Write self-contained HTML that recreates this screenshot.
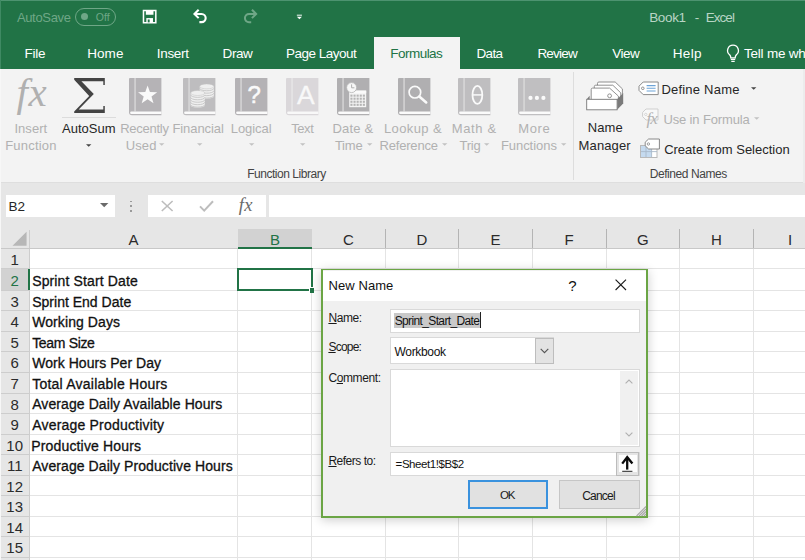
<!DOCTYPE html>
<html lang="en"><head><meta charset="utf-8"><title>Book1 - Excel</title>
<style>
html,body{margin:0;padding:0;}
body{width:805px;height:560px;overflow:hidden;position:relative;background:#e6e6e6;font-family:"Liberation Sans",sans-serif;}
#app{position:absolute;left:0;top:0;width:805px;height:560px;overflow:hidden;}
.t{position:absolute;white-space:pre;line-height:1;}
.t u{text-decoration:underline;text-underline-offset:1px;}
.a{position:absolute;}
svg{position:absolute;overflow:visible;}
</style></head><body><div id="app">
<div class="a" style="left:0;top:0;width:805px;height:69.2px;background:#217346;"></div>
<div class="a" style="left:0;top:0;width:805px;height:1px;background:#4d9370;"></div><div class="a" style="left:0;top:0;width:1px;height:69px;background:#3f8a63;"></div>
<div class="a" style="left:374.4px;top:37px;width:85.3px;height:33px;background:#f3f3f3;"></div>
<span class="t" style="left:16.90px;top:11.25px;font-size:13px;color:#6fa787;letter-spacing:-0.335px;">AutoSave</span>
<div class="a" style="left:75.3px;top:8.2px;width:40.7px;height:17.6px;border:1px solid #6fa787;border-radius:9px;box-sizing:border-box;"></div>
<div class="a" style="left:81px;top:13px;width:7px;height:7px;border-radius:50%;background:#6fa787;"></div>
<span class="t" style="left:95.70px;top:12.07px;font-size:10.5px;color:#6fa787;letter-spacing:0.053px;">Off</span>
<svg style="left:143.3px;top:10.4px" width="13.3" height="13.3" viewBox="0 0 14 14"><path d="M0.5 0.5h13v13h-13z" fill="none" stroke="#fff" stroke-width="1.6"/><rect x="3" y="0.5" width="8" height="4.5" fill="#fff"/><rect x="3.5" y="8.5" width="7" height="5" fill="#fff"/><rect x="5" y="10" width="2" height="3" fill="#217346"/></svg>
<svg style="left:193.2px;top:9.2px" width="14.6" height="14.6" viewBox="0 0 16 16"><path d="M1.6 5.4H9.4a4.5 4.5 0 0 1 0 9H7" fill="none" stroke="#fff" stroke-width="2.3"/><path d="M6.2 0.8L1.6 5.4L6.2 10" fill="none" stroke="#fff" stroke-width="2.3"/></svg>
<svg style="left:243px;top:9.2px" width="14.6" height="14.6" viewBox="0 0 16 16"><path d="M14.4 5.4H6.6a4.5 4.5 0 0 0 0 9H9" fill="none" stroke="#6fa787" stroke-width="2.2"/><path d="M9.8 0.8L14.4 5.4L9.8 10" fill="none" stroke="#6fa787" stroke-width="2.2"/></svg>
<svg style="left:296.4px;top:13.6px" width="6.8" height="6" viewBox="0 0 8 7"><rect x="1" y="0.8" width="6" height="1.1" fill="#fff"/><path d="M1 3.2h6L4 6.2z" fill="#fff"/></svg>
<span class="t" style="left:649.20px;top:11.21px;font-size:13.5px;color:#b9d5c5;letter-spacing:-0.343px;">Book1</span>
<span class="t" style="left:694.80px;top:11.21px;font-size:13.5px;color:#b9d5c5;">-</span>
<span class="t" style="left:705.80px;top:11.21px;font-size:13.5px;color:#b9d5c5;letter-spacing:-0.978px;">Excel</span>
<span class="t" style="left:24.60px;top:47.41px;font-size:13.5px;color:#fff;letter-spacing:-0.248px;">File</span>
<span class="t" style="left:87.20px;top:47.41px;font-size:13.5px;color:#fff;letter-spacing:0.066px;">Home</span>
<span class="t" style="left:156.80px;top:47.41px;font-size:13.5px;color:#fff;letter-spacing:-0.322px;">Insert</span>
<span class="t" style="left:222.60px;top:47.41px;font-size:13.5px;color:#fff;letter-spacing:-0.418px;">Draw</span>
<span class="t" style="left:286.00px;top:47.41px;font-size:13.5px;color:#fff;letter-spacing:-0.516px;">Page Layout</span>
<span class="t" style="left:390.30px;top:47.41px;font-size:13.5px;color:#217346;letter-spacing:-0.530px;">Formulas</span>
<span class="t" style="left:476.50px;top:47.41px;font-size:13.5px;color:#fff;letter-spacing:-0.669px;">Data</span>
<span class="t" style="left:537.40px;top:47.41px;font-size:13.5px;color:#fff;letter-spacing:-0.783px;">Review</span>
<span class="t" style="left:612.20px;top:47.41px;font-size:13.5px;color:#fff;letter-spacing:-0.523px;">View</span>
<span class="t" style="left:672.80px;top:47.41px;font-size:13.5px;color:#fff;letter-spacing:0.314px;">Help</span>
<svg style="left:726px;top:44px" width="14" height="19" viewBox="0 0 14 19"><path d="M7 1.2a5.4 5.4 0 0 0-3.4 9.6c.9.9 1.2 1.7 1.2 3h4.4c0-1.3.3-2.1 1.2-3A5.4 5.4 0 0 0 7 1.2z" fill="none" stroke="#fff" stroke-width="1.3"/><path d="M4.8 15.4h4.4M5.3 17.4h3.4" stroke="#fff" stroke-width="1.2"/></svg>
<span class="t" style="left:743.90px;top:47.41px;font-size:13.5px;color:#fff;letter-spacing:-0.2px;">Tell me what you want to do</span>
<div class="a" style="left:0;top:69px;width:805px;height:114px;background:#f3f3f3;"></div>
<span class="t" style="left:16.4px;top:72.2px;font-size:41px;font-family:'Liberation Serif', serif;font-style:italic;color:#b0b0b0;letter-spacing:0.6px;">fx</span>
<span class="t" style="left:14.40px;top:122.05px;font-size:13px;color:#b1b1b1;letter-spacing:0.060px;">Insert</span>
<span class="t" style="left:5.20px;top:139.25px;font-size:13px;color:#b1b1b1;letter-spacing:0.210px;">Function</span>
<svg style="left:73.8px;top:78.3px" width="31" height="35" viewBox="0 0 31 35"><path d="M0.2 0H30.8V7H29.3V3.3H7.4L19.8 16.1L4.7 31.6H29.3V28H30.8V35H0.2V33.4L15.2 18L0.2 1.8Z" fill="#444"/></svg>
<div class="a" style="left:62px;top:117px;width:54px;height:1px;background:#dcdcdc;"></div>
<span class="t" style="left:62.10px;top:122.15px;font-size:13px;color:#262626;letter-spacing:-0.007px;">AutoSum</span>
<svg style="left:86.3px;top:144.4px" width="5.4" height="3" viewBox="0 0 6 3"><path d="M0 0H6L3 3Z" fill="#444"/></svg>
<svg style="left:129.2px;top:77.5px" width="33" height="38" viewBox="0 0 33 38">
<path d="M1 0H32.4V37.2H3A3 3 0 0 1 0 34.2V1A1 1 0 0 1 1 0Z" fill="#b5b3b6"/>
<rect x="5.5" y="0" width="1.1" height="33.4" fill="#e2e2e2"/>
<path d="M2.4 33.4H32.4V35.9H2.4A1.25 1.25 0 0 1 2.4 33.4Z" fill="#fbfbfb"/>
<path d="M18.6 7.4L20.9 13.9L28.2 14.2L22.5 18.5L24.5 25.2L18.6 21.3L12.7 25.2L14.7 18.5L9 14.2L16.3 13.9Z" fill="#fafafa"/></svg>
<span class="t" style="left:120.20px;top:122.05px;font-size:13px;color:#b1b1b1;letter-spacing:-0.268px;">Recently</span>
<span class="t" style="left:125.70px;top:139.25px;font-size:13px;color:#b1b1b1;letter-spacing:0.127px;">Used</span>
<svg style="left:158.8px;top:143.4px" width="5.4" height="3" viewBox="0 0 6 3"><path d="M0 0H6L3 3Z" fill="#c2c2c2"/></svg>
<svg style="left:183.2px;top:77.5px" width="33" height="38" viewBox="0 0 33 38">
<path d="M1 0H32.4V37.2H3A3 3 0 0 1 0 34.2V1A1 1 0 0 1 1 0Z" fill="#bebdbf"/>
<rect x="5.5" y="0" width="1.1" height="33.4" fill="#e2e2e2"/>
<path d="M2.4 33.4H32.4V35.9H2.4A1.25 1.25 0 0 1 2.4 33.4Z" fill="#fbfbfb"/>
<path d="M16.700000000000003 8.4V18.200000000000003A7.1 2.5 0 0 0 30.9 18.200000000000003V8.4Z" fill="#efefef"/><path d="M16.700000000000003 10.250000000000002A7.1 2.5 0 0 0 30.9 10.250000000000002" fill="none" stroke="#c0c0c0" stroke-width="0.8"/><path d="M16.700000000000003 12.700000000000001A7.1 2.5 0 0 0 30.9 12.700000000000001" fill="none" stroke="#c0c0c0" stroke-width="0.8"/><path d="M16.700000000000003 15.15A7.1 2.5 0 0 0 30.9 15.15" fill="none" stroke="#c0c0c0" stroke-width="0.8"/><path d="M16.700000000000003 17.6A7.1 2.5 0 0 0 30.9 17.6" fill="none" stroke="#c0c0c0" stroke-width="0.8"/><ellipse cx="23.8" cy="8.4" rx="7.1" ry="2.5" fill="#efefef" stroke="#c0c0c0" stroke-width="0.5"/><path d="M7.6 15.0V27.25A7.1 2.5 0 0 0 21.799999999999997 27.25V15.0Z" fill="#efefef"/><path d="M7.6 16.849999999999998A7.1 2.5 0 0 0 21.799999999999997 16.849999999999998" fill="none" stroke="#c0c0c0" stroke-width="0.8"/><path d="M7.6 19.299999999999997A7.1 2.5 0 0 0 21.799999999999997 19.299999999999997" fill="none" stroke="#c0c0c0" stroke-width="0.8"/><path d="M7.6 21.75A7.1 2.5 0 0 0 21.799999999999997 21.75" fill="none" stroke="#c0c0c0" stroke-width="0.8"/><path d="M7.6 24.2A7.1 2.5 0 0 0 21.799999999999997 24.2" fill="none" stroke="#c0c0c0" stroke-width="0.8"/><path d="M7.6 26.65A7.1 2.5 0 0 0 21.799999999999997 26.65" fill="none" stroke="#c0c0c0" stroke-width="0.8"/><ellipse cx="14.7" cy="15.0" rx="7.1" ry="2.5" fill="#efefef" stroke="#c0c0c0" stroke-width="0.5"/></svg>
<span class="t" style="left:172.40px;top:122.05px;font-size:13px;color:#b1b1b1;letter-spacing:-0.067px;">Financial</span>
<svg style="left:196.8px;top:143.4px" width="5.4" height="3" viewBox="0 0 6 3"><path d="M0 0H6L3 3Z" fill="#c2c2c2"/></svg>
<svg style="left:235.3px;top:77.5px" width="33" height="38" viewBox="0 0 33 38">
<path d="M1 0H32.4V37.2H3A3 3 0 0 1 0 34.2V1A1 1 0 0 1 1 0Z" fill="#b4b2b5"/>
<rect x="5.5" y="0" width="1.1" height="33.4" fill="#e2e2e2"/>
<path d="M2.4 33.4H32.4V35.9H2.4A1.25 1.25 0 0 1 2.4 33.4Z" fill="#fbfbfb"/>
</svg>
<span class="t" style="left:247.4px;top:82.5px;font-size:24px;color:#fafafa;-webkit-text-stroke:0.5px #fafafa;">?</span>
<span class="t" style="left:230.80px;top:122.05px;font-size:13px;color:#b1b1b1;letter-spacing:-0.068px;">Logical</span>
<svg style="left:248.7px;top:143.4px" width="5.4" height="3" viewBox="0 0 6 3"><path d="M0 0H6L3 3Z" fill="#c2c2c2"/></svg>
<svg style="left:286.2px;top:77.5px" width="33" height="38" viewBox="0 0 33 38">
<path d="M1 0H32.4V37.2H3A3 3 0 0 1 0 34.2V1A1 1 0 0 1 1 0Z" fill="#dad7da"/>
<rect x="5.5" y="0" width="1.1" height="33.4" fill="#ececec"/>
<path d="M2.4 33.4H32.4V35.9H2.4A1.25 1.25 0 0 1 2.4 33.4Z" fill="#f8f8f8"/>
</svg>
<span class="t" style="left:297px;top:81.6px;font-size:26.5px;color:#f8f8f8;-webkit-text-stroke:0.3px #f8f8f8;">A</span>
<span class="t" style="left:291.20px;top:122.05px;font-size:13px;color:#b1b1b1;letter-spacing:-0.410px;">Text</span>
<svg style="left:299.7px;top:143.4px" width="5.4" height="3" viewBox="0 0 6 3"><path d="M0 0H6L3 3Z" fill="#c2c2c2"/></svg>
<svg style="left:337.1px;top:77.5px" width="33" height="38" viewBox="0 0 33 38">
<path d="M1 0H32.4V37.2H3A3 3 0 0 1 0 34.2V1A1 1 0 0 1 1 0Z" fill="#b0afb1"/>
<rect x="5.5" y="0" width="1.1" height="33.4" fill="#e2e2e2"/>
<path d="M2.4 33.4H32.4V35.9H2.4A1.25 1.25 0 0 1 2.4 33.4Z" fill="#fbfbfb"/>
<rect x="12.2" y="12.6" width="17" height="16.6" fill="#f4f4f4"/><rect x="12.2" y="12.6" width="17" height="2.6" fill="#fafafa"/><rect x="13.4" y="16.60" width="2.1" height="2.1" fill="#b4b4b4"/><rect x="16.5" y="16.60" width="2.1" height="2.1" fill="#b4b4b4"/><rect x="19.6" y="16.60" width="2.1" height="2.1" fill="#b4b4b4"/><rect x="22.7" y="16.60" width="2.1" height="2.1" fill="#b4b4b4"/><rect x="25.8" y="16.60" width="2.1" height="2.1" fill="#b4b4b4"/><rect x="13.4" y="19.65" width="2.1" height="2.1" fill="#b4b4b4"/><rect x="16.5" y="19.65" width="2.1" height="2.1" fill="#b4b4b4"/><rect x="19.6" y="19.65" width="2.1" height="2.1" fill="#b4b4b4"/><rect x="22.7" y="19.65" width="2.1" height="2.1" fill="#b4b4b4"/><rect x="25.8" y="19.65" width="2.1" height="2.1" fill="#b4b4b4"/><rect x="13.4" y="22.70" width="2.1" height="2.1" fill="#b4b4b4"/><rect x="16.5" y="22.70" width="2.1" height="2.1" fill="#b4b4b4"/><rect x="19.6" y="22.70" width="2.1" height="2.1" fill="#b4b4b4"/><rect x="22.7" y="22.70" width="2.1" height="2.1" fill="#b4b4b4"/><rect x="25.8" y="22.70" width="2.1" height="2.1" fill="#b4b4b4"/><rect x="13.4" y="25.75" width="2.1" height="2.1" fill="#b4b4b4"/><rect x="16.5" y="25.75" width="2.1" height="2.1" fill="#b4b4b4"/><rect x="19.6" y="25.75" width="2.1" height="2.1" fill="#b4b4b4"/><rect x="22.7" y="25.75" width="2.1" height="2.1" fill="#b4b4b4"/><rect x="25.8" y="25.75" width="2.1" height="2.1" fill="#b4b4b4"/><circle cx="14.6" cy="9.6" r="5" fill="#f7f7f7" stroke="#b4b4b4" stroke-width="0.8"/><path d="M14.6 6.4V9.8H17.4" fill="none" stroke="#b0b0b0" stroke-width="1"/></svg>
<span class="t" style="left:332.40px;top:122.05px;font-size:13px;color:#b1b1b1;letter-spacing:0.226px;">Date &amp;</span>
<span class="t" style="left:334.90px;top:139.25px;font-size:13px;color:#b1b1b1;letter-spacing:-0.225px;">Time</span>
<svg style="left:367.0px;top:143.4px" width="5.4" height="3" viewBox="0 0 6 3"><path d="M0 0H6L3 3Z" fill="#c2c2c2"/></svg>
<svg style="left:397.5px;top:77.5px" width="33" height="38" viewBox="0 0 33 38">
<path d="M1 0H32.4V37.2H3A3 3 0 0 1 0 34.2V1A1 1 0 0 1 1 0Z" fill="#b0afb1"/>
<rect x="5.5" y="0" width="1.1" height="33.4" fill="#e2e2e2"/>
<path d="M2.4 33.4H32.4V35.9H2.4A1.25 1.25 0 0 1 2.4 33.4Z" fill="#fbfbfb"/>
<circle cx="16.9" cy="14.2" r="5.8" fill="none" stroke="#fafafa" stroke-width="1.7"/><path d="M21.3 18.6L28.2 24.4" stroke="#fafafa" stroke-width="2.6" stroke-linecap="round"/></svg>
<span class="t" style="left:384.00px;top:122.05px;font-size:13px;color:#b1b1b1;letter-spacing:0.377px;">Lookup &amp;</span>
<span class="t" style="left:379.60px;top:139.25px;font-size:13px;color:#b1b1b1;letter-spacing:-0.206px;">Reference</span>
<svg style="left:441.5px;top:143.4px" width="5.4" height="3" viewBox="0 0 6 3"><path d="M0 0H6L3 3Z" fill="#c2c2c2"/></svg>
<svg style="left:458.4px;top:77.5px" width="33" height="38" viewBox="0 0 33 38">
<path d="M1 0H32.4V37.2H3A3 3 0 0 1 0 34.2V1A1 1 0 0 1 1 0Z" fill="#bfbec0"/>
<rect x="5.5" y="0" width="1.1" height="33.4" fill="#e2e2e2"/>
<path d="M2.4 33.4H32.4V35.9H2.4A1.25 1.25 0 0 1 2.4 33.4Z" fill="#fbfbfb"/>
<ellipse cx="19.4" cy="16.9" rx="4.9" ry="9" fill="none" stroke="#fafafa" stroke-width="1.8"/><path d="M14.8 16.9H24" stroke="#fafafa" stroke-width="1.5"/></svg>
<span class="t" style="left:451.70px;top:122.05px;font-size:13px;color:#b1b1b1;letter-spacing:0.657px;">Math &amp;</span>
<span class="t" style="left:459.60px;top:139.25px;font-size:13px;color:#b1b1b1;letter-spacing:-0.292px;">Trig</span>
<svg style="left:484.3px;top:143.4px" width="5.4" height="3" viewBox="0 0 6 3"><path d="M0 0H6L3 3Z" fill="#c2c2c2"/></svg>
<svg style="left:518px;top:77.5px" width="33" height="38" viewBox="0 0 33 38">
<path d="M1 0H32.4V37.2H3A3 3 0 0 1 0 34.2V1A1 1 0 0 1 1 0Z" fill="#c0bfc1"/>
<rect x="5.5" y="0" width="1.1" height="33.4" fill="#e2e2e2"/>
<path d="M2.4 33.4H32.4V35.9H2.4A1.25 1.25 0 0 1 2.4 33.4Z" fill="#fbfbfb"/>
<circle cx="12.5" cy="19.9" r="2.1" fill="#fafafa"/><circle cx="18.9" cy="19.9" r="2.1" fill="#fafafa"/><circle cx="25.4" cy="19.9" r="2.1" fill="#fafafa"/></svg>
<span class="t" style="left:518.30px;top:122.05px;font-size:13px;color:#b1b1b1;letter-spacing:0.571px;">More</span>
<span class="t" style="left:500.90px;top:139.25px;font-size:13px;color:#b1b1b1;letter-spacing:-0.045px;">Functions</span>
<svg style="left:561.3px;top:143.4px" width="5.4" height="3" viewBox="0 0 6 3"><path d="M0 0H6L3 3Z" fill="#c2c2c2"/></svg>
<span class="t" style="left:247.20px;top:168.34px;font-size:12px;color:#444;letter-spacing:-0.469px;">Function Library</span>
<div class="a" style="left:573px;top:72px;width:1px;height:108px;background:#dddddd;"></div>
<svg style="left:586px;top:81px" width="38" height="30" viewBox="0 0 38 30">
<path d="M11.5 17V2.4Q11.5 1 12.9 1H29.2L36.4 7.9V17Z" fill="#fff" stroke="#858585" stroke-width="0.9"/>
<path d="M8.3 18V5.6Q8.3 4.2 9.7 4.2H26.8L34.8 11.9V18Z" fill="#fff" stroke="#858585" stroke-width="0.9"/>
<path d="M5.2 19V8.5Q5.2 7.1 6.6 7.1H23.6L32.4 15.1V19Z" fill="#fff" stroke="#858585" stroke-width="0.9"/>
<circle cx="23.6" cy="14.8" r="1.9" fill="#fff" stroke="#858585" stroke-width="0.9"/>
<path d="M31.1 18.3L37.2 11.9V22.4L31.1 28.8Z" fill="#7a7a7a"/>
<path d="M0.7 18.3L3.6 14.8V18.3Z" fill="#7a7a7a"/>
<rect x="0.7" y="18.3" width="30.4" height="10.5" fill="#fff" stroke="#7a7a7a" stroke-width="0.9"/>
</svg>
<span class="t" style="left:587.70px;top:121.45px;font-size:13px;color:#262626;letter-spacing:0.151px;">Name</span>
<span class="t" style="left:578.60px;top:139.05px;font-size:13px;color:#262626;letter-spacing:0.120px;">Manager</span>
<svg style="left:638px;top:81px" width="22" height="15" viewBox="0 0 22 15">
<path d="M5.2 1H20.2V13.6H5.2L1 9.4V5.2Z" fill="#fff" stroke="#8a8a8a" stroke-width="1"/>
<circle cx="4.8" cy="7.3" r="1.3" fill="#fff" stroke="#7a7a7a" stroke-width="0.8"/>
<path d="M8.6 4.6H17.6M8.6 7.3H17.6M8.6 10H17.6" stroke="#6da4d8" stroke-width="1.1"/></svg>
<span class="t" style="left:661.40px;top:82.95px;font-size:13px;color:#262626;letter-spacing:0.216px;">Define Name</span>
<svg style="left:750.6px;top:86.5px" width="5.4" height="3" viewBox="0 0 6 3"><path d="M0 0H6L3 3Z" fill="#444"/></svg>
<svg style="left:641px;top:108px" width="20" height="20" viewBox="0 0 20 20">
<path d="M5 1H17V12H5L1.6 8.6V4.4Z" fill="#f8f8f8" stroke="#cfcfcf" stroke-width="1"/>
<circle cx="4.8" cy="6.4" r="1.2" fill="#f8f8f8" stroke="#cfcfcf" stroke-width="0.8"/></svg>
<span class="t" style="left:646.5px;top:110.2px;font-size:17px;font-family:'Liberation Serif', serif;font-style:italic;color:#b2b2b2;letter-spacing:-1px;">fx</span>
<span class="t" style="left:663.40px;top:112.55px;font-size:13px;color:#b1b1b1;letter-spacing:-0.131px;">Use in Formula</span>
<svg style="left:754.3px;top:116.8px" width="5.4" height="3" viewBox="0 0 6 3"><path d="M0 0H6L3 3Z" fill="#c2c2c2"/></svg>
<svg style="left:640px;top:138px" width="21" height="20" viewBox="0 0 21 20">
<rect x="0.5" y="7.5" width="16.5" height="12" fill="#fff" stroke="#b9b9b9" stroke-width="1"/>
<rect x="1" y="8" width="10.5" height="11" fill="#c5daef"/>
<path d="M6 8V19M11.6 8V19M1 13.6H17" stroke="#a9b9c9" stroke-width="0.9"/>
<path d="M8.6 1H19.4V11H8.6L5.2 7.8V4.2Z" fill="#fff" stroke="#888" stroke-width="1"/>
<circle cx="8.4" cy="6" r="1.2" fill="#fff" stroke="#888" stroke-width="0.8"/></svg>
<span class="t" style="left:664.20px;top:142.65px;font-size:13px;color:#262626;letter-spacing:-0.015px;">Create from Selection</span>
<span class="t" style="left:649.70px;top:167.94px;font-size:12px;color:#444;letter-spacing:-0.434px;">Defined Names</span>
<div class="a" style="left:0;top:182.2px;width:805px;height:1px;background:#dedede;"></div>
<div class="a" style="left:803px;top:69px;width:2px;height:114px;background:#ececec;"></div>
<div class="a" style="left:0;top:183px;width:805px;height:46px;background:#e6e6e6;"></div>
<div class="a" style="left:5.5px;top:195px;width:109px;height:22px;background:#fff;"></div>
<span class="t" style="left:8.40px;top:199.81px;font-size:13.5px;color:#262626;">B2</span>
<svg style="left:100.3px;top:203px" width="8.4" height="4.2" viewBox="0 0 8 4"><path d="M0 0H8L4 4Z" fill="#6a6a6a"/></svg>
<div class="a" style="left:130.4px;top:200.6px;width:1.6px;height:1.6px;background:#9a9a9a;"></div><div class="a" style="left:130.4px;top:205.4px;width:1.6px;height:1.6px;background:#9a9a9a;"></div><div class="a" style="left:130.4px;top:210.2px;width:1.6px;height:1.6px;background:#9a9a9a;"></div>
<div class="a" style="left:148px;top:195px;width:117.5px;height:22px;background:#fff;"></div>
<svg style="left:161px;top:200px" width="12" height="12" viewBox="0 0 12 12"><path d="M0.8 1L11.6 11M11.6 1L0.8 11" stroke="#bdbdbd" stroke-width="1.6" fill="none"/></svg>
<svg style="left:199px;top:200px" width="15" height="12" viewBox="0 0 15 12"><path d="M1 6.4L5.2 10.6L14 1.2" stroke="#bdbdbd" stroke-width="2" fill="none"/></svg>
<span class="t" style="left:238.8px;top:196px;font-size:18.5px;font-family:'Liberation Serif', serif;font-style:italic;color:#6a6a6a;letter-spacing:0.4px;">fx</span>
<div class="a" style="left:269px;top:195px;width:536px;height:22px;background:#fff;"></div>
<div class="a" style="left:0;top:248.4px;width:805px;height:311.6px;background:#fff;"></div>
<div class="a" style="left:0;top:228.8px;width:805px;height:19.599999999999994px;background:#e6e6e6;"></div>
<div class="a" style="left:0;top:248.4px;width:29.4px;height:311.6px;background:#e6e6e6;"></div>
<div class="a" style="left:237.8px;top:228.8px;width:74.09999999999997px;height:19.599999999999994px;background:#d2d2d2;"></div>
<div class="a" style="left:0;top:268.9px;width:29.4px;height:21.400000000000034px;background:#d2d2d2;"></div>
<div class="a" style="left:29.4px;top:268.40px;width:775.6px;height:1px;background:#e4e4e4;"></div>
<div class="a" style="left:0;top:268.40px;width:29.4px;height:1px;background:#cdcdcd;"></div>
<div class="a" style="left:29.4px;top:289.80px;width:775.6px;height:1px;background:#e4e4e4;"></div>
<div class="a" style="left:0;top:289.80px;width:29.4px;height:1px;background:#cdcdcd;"></div>
<div class="a" style="left:29.4px;top:310.30px;width:775.6px;height:1px;background:#e4e4e4;"></div>
<div class="a" style="left:0;top:310.30px;width:29.4px;height:1px;background:#cdcdcd;"></div>
<div class="a" style="left:29.4px;top:330.90px;width:775.6px;height:1px;background:#e4e4e4;"></div>
<div class="a" style="left:0;top:330.90px;width:29.4px;height:1px;background:#cdcdcd;"></div>
<div class="a" style="left:29.4px;top:351.40px;width:775.6px;height:1px;background:#e4e4e4;"></div>
<div class="a" style="left:0;top:351.40px;width:29.4px;height:1px;background:#cdcdcd;"></div>
<div class="a" style="left:29.4px;top:372.00px;width:775.6px;height:1px;background:#e4e4e4;"></div>
<div class="a" style="left:0;top:372.00px;width:29.4px;height:1px;background:#cdcdcd;"></div>
<div class="a" style="left:29.4px;top:392.50px;width:775.6px;height:1px;background:#e4e4e4;"></div>
<div class="a" style="left:0;top:392.50px;width:29.4px;height:1px;background:#cdcdcd;"></div>
<div class="a" style="left:29.4px;top:413.10px;width:775.6px;height:1px;background:#e4e4e4;"></div>
<div class="a" style="left:0;top:413.10px;width:29.4px;height:1px;background:#cdcdcd;"></div>
<div class="a" style="left:29.4px;top:433.60px;width:775.6px;height:1px;background:#e4e4e4;"></div>
<div class="a" style="left:0;top:433.60px;width:29.4px;height:1px;background:#cdcdcd;"></div>
<div class="a" style="left:29.4px;top:454.20px;width:775.6px;height:1px;background:#e4e4e4;"></div>
<div class="a" style="left:0;top:454.20px;width:29.4px;height:1px;background:#cdcdcd;"></div>
<div class="a" style="left:29.4px;top:474.70px;width:775.6px;height:1px;background:#e4e4e4;"></div>
<div class="a" style="left:0;top:474.70px;width:29.4px;height:1px;background:#cdcdcd;"></div>
<div class="a" style="left:29.4px;top:495.30px;width:775.6px;height:1px;background:#e4e4e4;"></div>
<div class="a" style="left:0;top:495.30px;width:29.4px;height:1px;background:#cdcdcd;"></div>
<div class="a" style="left:29.4px;top:515.80px;width:775.6px;height:1px;background:#e4e4e4;"></div>
<div class="a" style="left:0;top:515.80px;width:29.4px;height:1px;background:#cdcdcd;"></div>
<div class="a" style="left:29.4px;top:536.40px;width:775.6px;height:1px;background:#e4e4e4;"></div>
<div class="a" style="left:0;top:536.40px;width:29.4px;height:1px;background:#cdcdcd;"></div>
<div class="a" style="left:29.4px;top:556.90px;width:775.6px;height:1px;background:#e4e4e4;"></div>
<div class="a" style="left:0;top:556.90px;width:29.4px;height:1px;background:#cdcdcd;"></div>
<div class="a" style="left:29.4px;top:577.50px;width:775.6px;height:1px;background:#e4e4e4;"></div>
<div class="a" style="left:0;top:577.50px;width:29.4px;height:1px;background:#cdcdcd;"></div>
<div class="a" style="left:237.30px;top:248.4px;width:1px;height:311.6px;background:#e4e4e4;"></div>
<div class="a" style="left:311.40px;top:248.4px;width:1px;height:311.6px;background:#e4e4e4;"></div>
<div class="a" style="left:384.70px;top:248.4px;width:1px;height:311.6px;background:#e4e4e4;"></div>
<div class="a" style="left:384.70px;top:229.4px;width:1px;height:18.999999999999993px;background:#b4b4b4;"></div>
<div class="a" style="left:458.20px;top:248.4px;width:1px;height:311.6px;background:#e4e4e4;"></div>
<div class="a" style="left:458.20px;top:229.4px;width:1px;height:18.999999999999993px;background:#b4b4b4;"></div>
<div class="a" style="left:531.90px;top:248.4px;width:1px;height:311.6px;background:#e4e4e4;"></div>
<div class="a" style="left:531.90px;top:229.4px;width:1px;height:18.999999999999993px;background:#b4b4b4;"></div>
<div class="a" style="left:605.50px;top:248.4px;width:1px;height:311.6px;background:#e4e4e4;"></div>
<div class="a" style="left:605.50px;top:229.4px;width:1px;height:18.999999999999993px;background:#b4b4b4;"></div>
<div class="a" style="left:679.10px;top:248.4px;width:1px;height:311.6px;background:#e4e4e4;"></div>
<div class="a" style="left:679.10px;top:229.4px;width:1px;height:18.999999999999993px;background:#b4b4b4;"></div>
<div class="a" style="left:752.80px;top:248.4px;width:1px;height:311.6px;background:#e4e4e4;"></div>
<div class="a" style="left:752.80px;top:229.4px;width:1px;height:18.999999999999993px;background:#b4b4b4;"></div>
<div class="a" style="left:28.9px;top:229.8px;width:1px;height:330.2px;background:#cdcdcd;"></div>
<div class="a" style="left:0;top:247.9px;width:805px;height:1px;background:#c8c8c8;"></div>
<svg style="left:12.2px;top:231px" width="15" height="15.4" viewBox="0 0 16 16"><path d="M15.5 0.5V15.5H0.5Z" fill="#b7b7b7"/></svg>
<div class="a" style="left:237.8px;top:247.0px;width:74.09999999999997px;height:2px;background:#217346;"></div>
<div class="a" style="left:27.7px;top:268.9px;width:2px;height:21.400000000000034px;background:#217346;"></div>
<span class="t" style="left:113.6px;width:40px;text-align:center;top:232.37px;font-size:15px;color:#2b2b2b;">A</span>
<span class="t" style="left:254.9px;width:40px;text-align:center;top:232.37px;font-size:15px;color:#217346;">B</span>
<span class="t" style="left:328.5px;width:40px;text-align:center;top:232.37px;font-size:15px;color:#2b2b2b;">C</span>
<span class="t" style="left:401.9px;width:40px;text-align:center;top:232.37px;font-size:15px;color:#2b2b2b;">D</span>
<span class="t" style="left:475.5px;width:40px;text-align:center;top:232.37px;font-size:15px;color:#2b2b2b;">E</span>
<span class="t" style="left:549.2px;width:40px;text-align:center;top:232.37px;font-size:15px;color:#2b2b2b;">F</span>
<span class="t" style="left:622.8px;width:40px;text-align:center;top:232.37px;font-size:15px;color:#2b2b2b;">G</span>
<span class="t" style="left:696.5px;width:40px;text-align:center;top:232.37px;font-size:15px;color:#2b2b2b;">H</span>
<span class="t" style="left:770.2px;width:40px;text-align:center;top:232.37px;font-size:15px;color:#2b2b2b;">I</span>
<span class="t" style="left:0;width:29.4px;text-align:center;top:251.92px;font-size:15px;color:#2b2b2b;">1</span>
<span class="t" style="left:0;width:29.4px;text-align:center;top:272.87px;font-size:15px;color:#217346;">2</span>
<span class="t" style="left:0;width:29.4px;text-align:center;top:293.82px;font-size:15px;color:#2b2b2b;">3</span>
<span class="t" style="left:0;width:29.4px;text-align:center;top:314.37px;font-size:15px;color:#2b2b2b;">4</span>
<span class="t" style="left:0;width:29.4px;text-align:center;top:334.92px;font-size:15px;color:#2b2b2b;">5</span>
<span class="t" style="left:0;width:29.4px;text-align:center;top:355.47px;font-size:15px;color:#2b2b2b;">6</span>
<span class="t" style="left:0;width:29.4px;text-align:center;top:376.02px;font-size:15px;color:#2b2b2b;">7</span>
<span class="t" style="left:0;width:29.4px;text-align:center;top:396.57px;font-size:15px;color:#2b2b2b;">8</span>
<span class="t" style="left:0;width:29.4px;text-align:center;top:417.12px;font-size:15px;color:#2b2b2b;">9</span>
<span class="t" style="left:0;width:29.4px;text-align:center;top:437.67px;font-size:15px;color:#2b2b2b;">10</span>
<span class="t" style="left:0;width:29.4px;text-align:center;top:458.22px;font-size:15px;color:#2b2b2b;">11</span>
<span class="t" style="left:0;width:29.4px;text-align:center;top:478.77px;font-size:15px;color:#2b2b2b;">12</span>
<span class="t" style="left:0;width:29.4px;text-align:center;top:499.32px;font-size:15px;color:#2b2b2b;">13</span>
<span class="t" style="left:0;width:29.4px;text-align:center;top:519.87px;font-size:15px;color:#2b2b2b;">14</span>
<span class="t" style="left:0;width:29.4px;text-align:center;top:540.42px;font-size:15px;color:#2b2b2b;">15</span>
<span class="t" style="left:32.20px;top:273.76px;font-size:14px;color:#111;letter-spacing:0.131px;-webkit-text-stroke:0.3px #111;">Sprint Start Date</span>
<span class="t" style="left:32.20px;top:294.71px;font-size:14px;color:#111;letter-spacing:0.011px;-webkit-text-stroke:0.3px #111;">Sprint End Date</span>
<span class="t" style="left:32.20px;top:315.26px;font-size:14px;color:#111;letter-spacing:0.084px;-webkit-text-stroke:0.3px #111;">Working Days</span>
<span class="t" style="left:32.20px;top:335.81px;font-size:14px;color:#111;letter-spacing:-0.334px;-webkit-text-stroke:0.3px #111;">Team Size</span>
<span class="t" style="left:32.20px;top:356.36px;font-size:14px;color:#111;letter-spacing:0.041px;-webkit-text-stroke:0.3px #111;">Work Hours Per Day</span>
<span class="t" style="left:32.20px;top:376.91px;font-size:14px;color:#111;letter-spacing:0.232px;-webkit-text-stroke:0.3px #111;">Total Available Hours</span>
<span class="t" style="left:32.20px;top:397.46px;font-size:14px;color:#111;letter-spacing:0.083px;-webkit-text-stroke:0.3px #111;">Average Daily Available Hours</span>
<span class="t" style="left:32.20px;top:418.01px;font-size:14px;color:#111;letter-spacing:0.198px;-webkit-text-stroke:0.3px #111;">Average Productivity</span>
<span class="t" style="left:31.20px;top:438.56px;font-size:14px;color:#111;letter-spacing:0.168px;-webkit-text-stroke:0.3px #111;">Productive Hours</span>
<span class="t" style="left:32.20px;top:459.11px;font-size:14px;color:#111;letter-spacing:0.080px;-webkit-text-stroke:0.3px #111;">Average Daily Productive Hours</span>
<div class="a" style="left:237px;top:268.1px;width:76.3px;height:23.4px;border:2px solid #217346;box-sizing:border-box;"></div>
<div class="a" style="left:308.8px;top:287.2px;width:4.6px;height:4.4px;background:#217346;border:1px solid #fff;border-right:none;border-bottom:none;box-sizing:content-box;"></div>
<div class="a" style="left:0;top:69px;width:1.2px;height:491px;background:#f7f7f7;"></div>
<div class="a" style="left:320.7px;top:269.3px;width:327.09999999999997px;height:248.40000000000003px;box-sizing:border-box;border:2px solid #6ba545;border-top-width:1.6px;background:#f0f0f0;box-shadow:0 2px 10px 0 rgba(0,0,0,0.20);"></div>
<div class="a" style="left:322.7px;top:270.90000000000003px;width:323.09999999999997px;height:30.099999999999987px;background:#fff;"></div>
<span class="t" style="left:328.60px;top:279.05px;font-size:13px;color:#111;letter-spacing:0.062px;">New Name</span>
<span class="t" style="left:568.20px;top:277.87px;font-size:15px;color:#111;">?</span>
<svg style="left:615.4px;top:279.2px" width="11.6" height="11.6" viewBox="0 0 12 12"><path d="M0.6 0.6L11.4 11.4M11.4 0.6L0.6 11.4" stroke="#1a1a1a" stroke-width="1.15" fill="none"/></svg>
<span class="t" style="left:328.40px;top:312.34px;font-size:12px;color:#1a1a1a;letter-spacing:-0.402px;"><u>N</u>ame:</span>
<span class="t" style="left:328.40px;top:341.04px;font-size:12px;color:#1a1a1a;letter-spacing:-0.765px;"><u>S</u>cope:</span>
<span class="t" style="left:328.40px;top:372.44px;font-size:12px;color:#1a1a1a;letter-spacing:-0.373px;">C<u>o</u>mment:</span>
<span class="t" style="left:328.40px;top:455.04px;font-size:12px;color:#1a1a1a;letter-spacing:-0.487px;"><u>R</u>efers to:</span>
<div class="a" style="left:390px;top:309.4px;width:250px;height:23.6px;box-sizing:border-box;border:1px solid #d9d9d9;background:#fff;"></div>
<div class="a" style="left:394px;top:312.6px;width:86.4px;height:15.6px;background:#c9c9c9;"></div>
<span class="t" style="left:394.70px;top:315.14px;font-size:12px;color:#111;letter-spacing:-0.632px;">Sprint_Start_Date</span>
<div class="a" style="left:480.2px;top:312.4px;width:1px;height:16px;background:#222;"></div>
<div class="a" style="left:390px;top:337.4px;width:164.4px;height:27px;box-sizing:border-box;border:1px solid #d9d9d9;background:#fff;"></div>
<div class="a" style="left:535.2px;top:338.2px;width:18.8px;height:25.4px;box-sizing:border-box;border:1px solid #bdbdbd;background:#e3e3e3;"></div>
<svg style="left:540.4px;top:348.4px" width="9" height="6" viewBox="0 0 9 6"><path d="M0.7 0.8L4.5 4.6L8.3 0.8" stroke="#555" stroke-width="1.1" fill="none"/></svg>
<span class="t" style="left:394.60px;top:345.94px;font-size:12px;color:#111;letter-spacing:-0.343px;">Workbook</span>
<div class="a" style="left:389.8px;top:369px;width:249.8px;height:78.4px;box-sizing:border-box;border:1px solid #d9d9d9;background:#fff;"></div>
<div class="a" style="left:619.6px;top:371px;width:18.2px;height:74.4px;background:#f0f0f0;"></div>
<svg style="left:624.6px;top:379.4px" width="8" height="5" viewBox="0 0 8 5"><path d="M0.6 4.4L4 1L7.4 4.4" stroke="#b0b0b0" stroke-width="1.1" fill="none"/></svg>
<svg style="left:624.6px;top:432px" width="8" height="5" viewBox="0 0 8 5"><path d="M0.6 0.6L4 4L7.4 0.6" stroke="#b0b0b0" stroke-width="1.1" fill="none"/></svg>
<div class="a" style="left:390px;top:451.6px;width:250px;height:24.6px;box-sizing:border-box;border:1px solid #d9d9d9;background:#fff;"></div>
<span class="t" style="left:395.60px;top:458.98px;font-size:11.5px;color:#111;letter-spacing:-0.429px;">=Sheet1!$B$2</span>
<div class="a" style="left:615.7px;top:452px;width:23.6px;height:23.6px;box-sizing:border-box;border:1px solid #bcbcbc;background:#e4e4e4;"></div>
<div class="a" style="left:619.2px;top:455px;width:17.4px;height:17.4px;background:#fdfdfd;"></div>
<svg style="left:620px;top:455px" width="15" height="18" viewBox="0 0 15 18"><path d="M7.2 2.4V14.6" stroke="#0a0a0a" stroke-width="2.3" fill="none"/><path d="M2.2 8.6L7.2 2.2L12.4 8.6" stroke="#0a0a0a" stroke-width="2.3" fill="none" stroke-linejoin="miter"/><rect x="2.2" y="15.8" width="10.2" height="1" fill="#222"/></svg>
<div class="a" style="left:467.8px;top:480.4px;width:80.6px;height:28.2px;box-sizing:border-box;border:2px solid #3a92de;background:#e1e1e1;"></div>
<div class="a" style="left:558.8px;top:480.4px;width:80.8px;height:28.2px;box-sizing:border-box;border:1px solid #c6c6c6;background:#e1e1e1;"></div>
<span class="t" style="left:500.00px;top:489.88px;font-size:11.5px;color:#1a1a1a;letter-spacing:-1.145px;">OK</span>
<span class="t" style="left:582.20px;top:489.64px;font-size:12px;color:#1a1a1a;letter-spacing:-0.778px;">Cancel</span>
<svg style="left:635.4px;top:505.4px" width="11" height="11" viewBox="0 0 11 11"><path d="M1.5 11L11 1.5" stroke="#a8a8a8" stroke-width="1.1"/><path d="M4.0 11L11 4.0" stroke="#a8a8a8" stroke-width="1.1"/><path d="M6.5 11L11 6.5" stroke="#a8a8a8" stroke-width="1.1"/><path d="M9.0 11L11 9.0" stroke="#a8a8a8" stroke-width="1.1"/></svg>
</div></body></html>
